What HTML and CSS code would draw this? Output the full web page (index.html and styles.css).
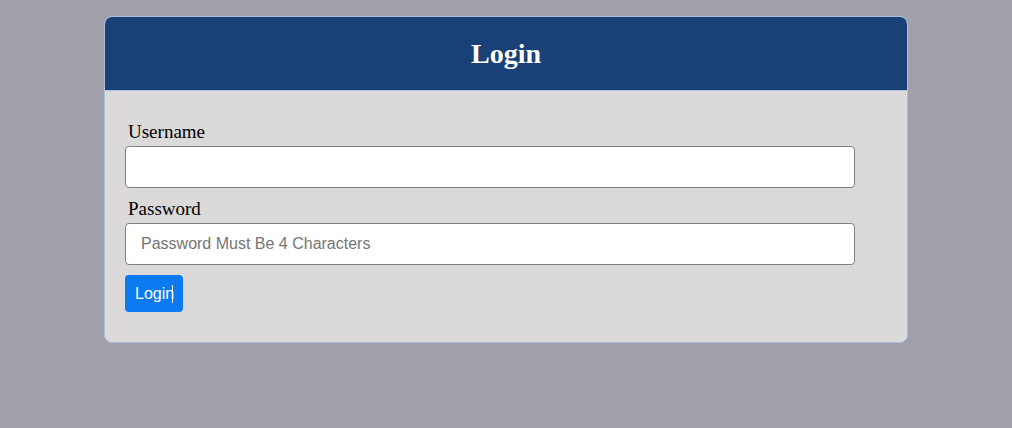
FILE: index.html
```html
<!DOCTYPE html>
<html>
<head>
<meta charset="utf-8">
<link rel="stylesheet" href="styles.css">
</head>
<body>
<div class="card">
  <div class="card-header">
    <h1 class="title">Login</h1>
  </div>
  <form class="card-body">
    <label class="label" for="u">Username</label>
    <input class="field" id="u" type="text">
    <label class="label label-second" for="p">Password</label>
    <input class="field" id="p" type="password" placeholder="Password Must Be 4 Characters">
    <button class="btn" type="button">Login<span class="caret"></span></button>
  </form>
</div>
</body>
</html>
```
FILE: styles.css
```css
html, body {
  margin: 0;
  padding: 0;
}
body {
  background: #a1a0aa;
  font-family: "Liberation Serif", "Times New Roman", serif;
  padding-top: 16px;
  height: 428px;
  box-sizing: border-box;
}
.card {
  width: 804px;
  margin: 0 auto;
  box-sizing: border-box;
  border: 1px solid #aac0de;
  border-radius: 8px;
  background: #dbd9da;
  overflow: hidden;
}
.card-header {
  background: #1a4078;
  height: 74px;
  border-bottom: 1px solid #aac0de;
  box-sizing: border-box;
  display: flex;
  align-items: center;
  justify-content: center;
}
.title {
  margin: 0;
  color: #ffffff;
  font-size: 28px;
  font-weight: bold;
  line-height: 32px;
  padding-top: 1px;
}
.card-body {
  display: flex;
  flex-direction: column;
  align-items: flex-start;
  padding: 30px 20px 30px 20px;
}
.label {
  font-size: 19px;
  line-height: 22px;
  color: #000;
  margin-left: 3px;
  margin-bottom: 3px;
}
.label-second {
  margin-top: 10px;
}
.field {
  width: 730px;
  height: 42px;
  box-sizing: border-box;
  border: 1px solid #808080;
  border-radius: 4px;
  background: #fff;
  padding: 0 15px;
  font-family: "Liberation Sans", Arial, sans-serif;
  font-size: 16px;
  color: #333;
  outline: none;
  margin: 0;
}
.field::placeholder {
  color: #757575;
}
.btn {
  margin-top: 10px;
  height: 37px;
  padding: 0 9px 0 10px;
  background: #0b7af1;
  color: #fff;
  border: none;
  border-radius: 4px;
  font-family: "Liberation Sans", Arial, sans-serif;
  font-size: 16px;
  display: flex;
  align-items: center;
}
.caret {
  display: inline-block;
  width: 1px;
  height: 18px;
  background: #fff;
  margin-left: -2px;
  margin-right: 1px;
}
```
